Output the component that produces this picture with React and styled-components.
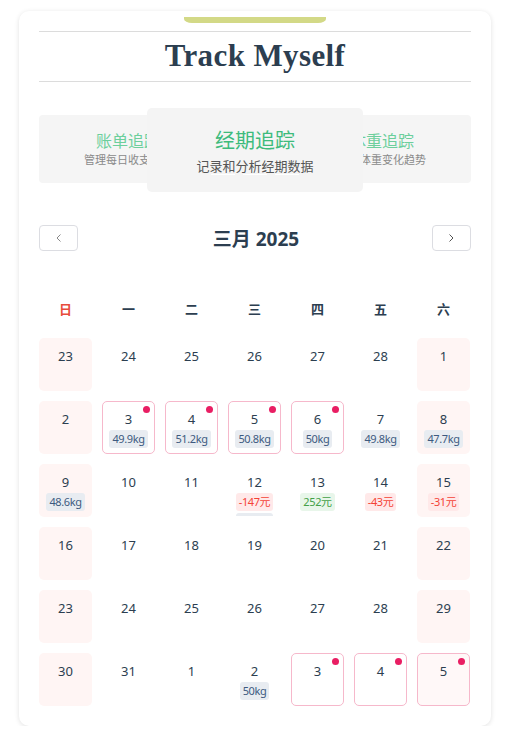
import React from 'react';
import styled, { createGlobalStyle, css } from 'styled-components';

const GlobalStyle = createGlobalStyle`
  * { box-sizing: border-box; }
  body {
    margin: 0;
    background: #ffffff;
    font-family: "Noto Sans", "Noto Sans CJK SC", sans-serif;
    color: #2c3e50;
  }
`;

const weekdays = ['日', '一', '二', '三', '四', '五', '六'];

// tags: w = weight, in = income, out = expense, bar = clipped overflow strip
const days = [
  { d: 23 }, { d: 24 }, { d: 25 }, { d: 26 }, { d: 27 }, { d: 28 }, { d: 1 },
  { d: 2 }, { d: 3, p: true, tags: [['w', '49.9kg']] }, { d: 4, p: true, tags: [['w', '51.2kg']] },
  { d: 5, p: true, tags: [['w', '50.8kg']] }, { d: 6, p: true, tags: [['w', '50kg']] },
  { d: 7, tags: [['w', '49.8kg']] }, { d: 8, tags: [['w', '47.7kg']] },
  { d: 9, tags: [['w', '48.6kg']] }, { d: 10 }, { d: 11 },
  { d: 12, tags: [['out', '-147元'], ['bar', '']] }, { d: 13, tags: [['in', '252元']] },
  { d: 14, tags: [['out', '-43元']] }, { d: 15, tags: [['out', '-31元']] },
  { d: 16 }, { d: 17 }, { d: 18 }, { d: 19 }, { d: 20 }, { d: 21 }, { d: 22 },
  { d: 23 }, { d: 24 }, { d: 25 }, { d: 26 }, { d: 27 }, { d: 28 }, { d: 29 },
  { d: 30 }, { d: 31 }, { d: 1 }, { d: 2, tags: [['w', '50kg']] },
  { d: 3, p: true }, { d: 4, p: true }, { d: 5, p: true },
];

const App = () => {
  return (
    <>
      <GlobalStyle />
      <Card>
        <TopBar />
        <Rule />
        <Title>Track Myself</Title>
        <Rule />

        <Carousel>
          <SideSlide $left>
            <SlideTitle>账单追踪</SlideTitle>
            <SlideText>管理每日收支情况</SlideText>
          </SideSlide>
          <SideSlide>
            <SlideTitle>体重追踪</SlideTitle>
            <SlideText>记录体重变化趋势</SlideText>
          </SideSlide>
          <MainSlide>
            <MainTitle>经期追踪</MainTitle>
            <MainText>记录和分析经期数据</MainText>
            <Dots>
              <Dot /><Dot /><Dot />
            </Dots>
          </MainSlide>
        </Carousel>

        <Nav>
          <NavButton aria-label="prev">
            <svg width="10" height="10" viewBox="0 0 10 10"><path d="M6.5 1.5 3 5l3.5 3.5" fill="none" stroke="#888" strokeWidth="1" /></svg>
          </NavButton>
          <Month>三月 2025</Month>
          <NavButton aria-label="next">
            <svg width="10" height="10" viewBox="0 0 10 10"><path d="M3.5 1.5 7 5 3.5 8.5" fill="none" stroke="#555" strokeWidth="1" /></svg>
          </NavButton>
        </Nav>

        <WeekRow>
          {weekdays.map((w, i) => (
            <WeekDay key={w} $sun={i === 0}>{w}</WeekDay>
          ))}
        </WeekRow>

        <Grid>
          {days.map((day, i) => {
            const col = i % 7;
            return (
              <Cell key={i} $weekend={col === 0 || col === 6} $period={day.p}>
                {day.p && <PeriodDot />}
                <DayNum>{day.d}</DayNum>
                {day.tags && day.tags.map(([kind, text], j) => (
                  <Tag key={j} $kind={kind}>{text}</Tag>
                ))}
              </Cell>
            );
          })}
        </Grid>
      </Card>
    </>
  );
};

export default App;

const Card = styled.div`
  width: 472px;
  margin: 11px 0 0 19px;
  padding: 6px 20px 20px;
  background: #fff;
  border-radius: 10px;
  box-shadow: 0 1px 5px rgba(0, 0, 0, 0.12);
`;

const TopBar = styled.div`
  width: 142px;
  height: 6px;
  margin: 0 auto;
  background: #d3d987;
  border-radius: 0 0 8px 8px / 0 0 4px 4px;
`;

const Rule = styled.div`
  height: 1px;
  background: #dcdcdc;
  margin-top: 8px;
`;

const Title = styled.h1`
  margin: 0;
  height: 49px;
  line-height: 47px;
  text-align: center;
  font-family: "Liberation Serif", serif;
  font-size: 31px;
  font-weight: bold;
  color: #2c3e50;
  letter-spacing: 0.4px;

  & + ${Rule} { margin-top: 0; }
`;

const Carousel = styled.div`
  position: relative;
  height: 84px;
  margin-top: 26px;
`;

const slideText = css`
  display: block;
  text-align: center;
  white-space: nowrap;
  font-family: "Noto Sans CJK SC", sans-serif;
`;

const SideSlide = styled.div`
  position: absolute;
  top: 7px;
  ${p => (p.$left ? 'left: 0;' : 'right: 0;')}
  width: 178px;
  height: 68px;
  background: #f5f5f5;
  border-radius: 4px;
  padding-top: 14px;
`;

const SlideTitle = styled.span`
  ${slideText}
  font-size: 16px;
  line-height: 22px;
  color: #6ccf9c;
`;

const SlideText = styled.span`
  ${slideText}
  font-size: 11px;
  line-height: 16px;
  color: #8a8a8a;
`;

const MainSlide = styled.div`
  position: absolute;
  top: 0;
  left: 108px;
  width: 216px;
  height: 84px;
  background: #f4f4f4;
  border-radius: 5px;
  padding-top: 19px;
  z-index: 2;
`;

const MainTitle = styled.span`
  ${slideText}
  font-size: 20px;
  line-height: 26px;
  color: #3dbb7c;
`;

const MainText = styled.span`
  ${slideText}
  font-size: 13px;
  line-height: 20px;
  margin-top: 3px;
  color: #555;
`;

const Dots = styled.div`
  display: flex;
  justify-content: center;
  gap: 8px;
  margin-top: -2px;
`;

const Dot = styled.span`
  width: 24px;
  height: 1px;
  background: #fff;
`;

const Nav = styled.div`
  display: flex;
  align-items: center;
  justify-content: space-between;
  margin-top: 33px;
  height: 26px;
`;

const NavButton = styled.button`
  width: 39px;
  height: 26px;
  display: flex;
  align-items: center;
  justify-content: center;
  padding: 0;
  background: #fff;
  border: 1px solid #dcdde2;
  border-radius: 4px;
`;

const Month = styled.div`
  font-family: "Noto Sans", "Noto Sans CJK SC", sans-serif;
  font-size: 19px;
  font-weight: 700;
  color: #2c3e50;
  margin-left: 2px;
`;

const WeekRow = styled.div`
  display: grid;
  grid-template-columns: repeat(7, 53px);
  column-gap: 10px;
  margin-top: 48px;
  height: 20px;
`;

const WeekDay = styled.div`
  text-align: center;
  font-family: "Noto Sans CJK SC", sans-serif;
  font-size: 13px;
  line-height: 20px;
  font-weight: 700;
  color: ${p => (p.$sun ? '#e74c3c' : '#2c3e50')};
`;

const Grid = styled.div`
  display: grid;
  grid-template-columns: repeat(7, 53px);
  grid-auto-rows: 53px;
  gap: 10px;
  margin-top: 19px;
`;

const Cell = styled.div`
  position: relative;
  display: flex;
  flex-direction: column;
  align-items: center;
  gap: 2px;
  padding-top: 8px;
  overflow: hidden;
  border-radius: 5px;
  background: ${p => (p.$weekend ? '#fff5f4' : '#fff')};
  border: 1px solid ${p => (p.$period ? '#f6b8cb' : 'transparent')};
  ${p => p.$period && p.$weekend && 'background: #fff8f8;'}
`;

const PeriodDot = styled.span`
  position: absolute;
  top: 4px;
  right: 4px;
  width: 7px;
  height: 7px;
  border-radius: 50%;
  background: #e91e63;
`;

const DayNum = styled.span`
  font-size: 13px;
  line-height: 18px;
  color: #2c3e50;
`;

const tagColors = {
  w: ['#e8ecf1', '#3d5a80'],
  bar: ['#e8ecf1', '#3d5a80'],
  in: ['#e8f6ea', '#43a047'],
  out: ['#ffe9e9', '#f44336'],
};

const Tag = styled.span`
  flex-shrink: 0;
  height: 18px;
  line-height: 18px;
  padding: 0 3px;
  border-radius: 3px;
  font-family: "Noto Sans", "Noto Sans CJK SC", sans-serif;
  font-size: 11px;
  letter-spacing: -0.4px;
  background: ${p => tagColors[p.$kind][0]};
  color: ${p => tagColors[p.$kind][1]};
  ${p => p.$kind === 'bar' && 'width: 37px;'}
`;
